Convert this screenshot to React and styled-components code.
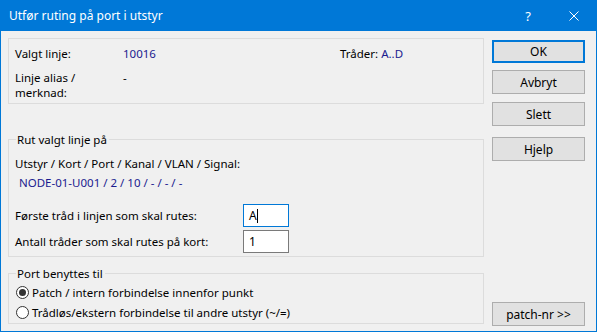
import React from "react";
import styled, { createGlobalStyle } from "styled-components";

const Global = createGlobalStyle`
  html, body { margin: 0; padding: 0; background: #f0f0f0; }
  body { font-family: "Noto Sans", "Segoe UI", sans-serif; font-size: 11.5px; color: #000; }
  * { box-sizing: border-box; }
`;

const Window = styled.div`
  width: 597px;
  height: 332px;
  border: 1px solid #0078d7;
  border-top: none;
  background: #f0f0f0;
  display: flex;
  flex-direction: column;
  overflow: hidden;
`;

const TitleBar = styled.div`
  height: 31px;
  background: #0078d7;
  color: #fff;
  display: flex;
  align-items: center;
  padding-left: 9px;
  margin: 0 -1px;
  font-size: 12px;
  flex: none;
`;

const TitleText = styled.div`
  flex: 1;
`;

const TitleButton = styled.div`
  width: 46px;
  height: 31px;
  display: flex;
  align-items: center;
  justify-content: center;
  color: #fff;
  font-size: 13px;
`;

const Body = styled.div`
  flex: 1;
  display: flex;
  padding: 7px 11px 0 7px;
  gap: 8px;
`;

const LeftCol = styled.div`
  width: 476px;
  display: flex;
  flex-direction: column;
`;

const RightCol = styled.div`
  width: 93px;
  display: flex;
  flex-direction: column;
`;

const Box = styled.div`
  border: 1px solid #dcdcdc;
  height: 66px;
  display: grid;
  grid-template-columns: 108px 217px 1fr;
  grid-template-rows: 16px 32px;
  row-gap: 8px;
  padding: 7px 6px 0 6px;
  line-height: 15px;
`;

const Group = styled.fieldset`
  border: 1px solid #dcdcdc;
  margin: ${(p) => p.$mt}px 0 0 0;
  padding: 0 6px 0 6px;
  height: ${(p) => p.$h}px;
  min-width: 0;
  line-height: 15px;
  display: flex;
  flex-direction: column;
`;

const Legend = styled.legend`
  padding: 0 2px 0 1px;
  margin-left: 1px;
  line-height: 15px;
`;

const Label = styled.div``;

const Value = styled.span`
  color: #1b1b8f;
`;

const Row = styled.div`
  display: flex;
  align-items: center;
  height: 23px;
  margin-top: ${(p) => p.$mt || 0}px;
`;

const RowLabel = styled.div`
  width: 228px;
`;

const Input = styled.div`
  width: 46px;
  height: 23px;
  background: #fff;
  border: 1px solid ${(p) => (p.$focus ? "#0078d7" : "#7a7a7a")};
  padding-left: 5px;
  display: flex;
  align-items: center;
  font-size: 12px;
`;

const Caret = styled.span`
  display: inline-block;
  width: 1px;
  height: 14px;
  background: #000;
`;

const TextLine = styled.div`
  margin-top: ${(p) => p.$mt || 0}px;
  padding-left: ${(p) => p.$pl || 0}px;
  color: ${(p) => p.$color || "#000"};
`;

const RadioRow = styled.label`
  display: flex;
  align-items: center;
  gap: 3px;
  height: 15px;
  margin-top: ${(p) => p.$mt || 0}px;
  margin-left: 1px;
`;

const RadioCircle = styled.span`
  width: 13px;
  height: 13px;
  border-radius: 50%;
  border: 1px solid #333;
  background: #fff;
  display: flex;
  align-items: center;
  justify-content: center;
  flex: none;
  &::after {
    content: "";
    width: 7px;
    height: 7px;
    border-radius: 50%;
    background: ${(p) => (p.$checked ? "#333" : "transparent")};
  }
`;

const Button = styled.div`
  height: ${(p) => (p.$h ? p.$h : 24)}px;
  margin-top: ${(p) => p.$mt || 0}px;
  margin-bottom: ${(p) => p.$mb || 0}px;
  background: #e1e1e1;
  border: ${(p) => (p.$default ? "2px solid #0078d7" : "1px solid #adadad")};
  display: flex;
  align-items: center;
  justify-content: center;
  font-size: 12px;
`;

const Spacer = styled.div`
  flex: 1;
`;

export default function App() {
  return (
    <>
      <Global />
      <Window>
        <TitleBar>
          <TitleText>Utfør ruting på port i utstyr</TitleText>
          <TitleButton>?</TitleButton>
          <TitleButton>
            <svg width="10" height="10" viewBox="0 0 10 10">
              <path d="M0.5 0.5 L9.5 9.5 M9.5 0.5 L0.5 9.5" stroke="#fff" strokeWidth="1" />
            </svg>
          </TitleButton>
        </TitleBar>
        <Body>
          <LeftCol>
            <Box>
              <Label>Valgt linje:</Label>
              <Value>10016</Value>
              <Label>
                Tråder: <Value>A..D</Value>
              </Label>
              <Label>
                Linje alias /
                <br />
                merknad:
              </Label>
              <Label>-</Label>
              <Label />
            </Box>
            <Group $mt={28} $h={125}>
              <Legend>Rut valgt linje på</Legend>
              <TextLine $mt={9}>Utstyr / Kort / Port / Kanal / VLAN / Signal:</TextLine>
              <TextLine $mt={4} $pl={4} $color="#1b1b8f">
                NODE-01-U001 / 2 / 10 / - / - / -
              </TextLine>
              <Row $mt={14}>
                <RowLabel>Første tråd i linjen som skal rutes:</RowLabel>
                <Input $focus>
                  A<Caret />
                </Input>
              </Row>
              <Row $mt={3}>
                <RowLabel>Antall tråder som skal rutes på kort:</RowLabel>
                <Input>1</Input>
              </Row>
            </Group>
            <Group $mt={9} $h={58}>
              <Legend>Port benyttes til</Legend>
              <RadioRow $mt={4}>
                <RadioCircle $checked />
                Patch / intern forbindelse innenfor punkt
              </RadioRow>
              <RadioRow $mt={5}>
                <RadioCircle />
                Trådløs/ekstern forbindelse til andre utstyr (~/=)
              </RadioRow>
            </Group>
          </LeftCol>
          <RightCol>
            <Button $default $mt={2} $h={23}>OK</Button>
            <Button $mt={7}>Avbryt</Button>
            <Button $mt={8}>Slett</Button>
            <Button $mt={11}>Hjelp</Button>
            <Spacer />
            <Button $h={24} $mb={5}>patch-nr &gt;&gt;</Button>
          </RightCol>
        </Body>
      </Window>
    </>
  );
}
